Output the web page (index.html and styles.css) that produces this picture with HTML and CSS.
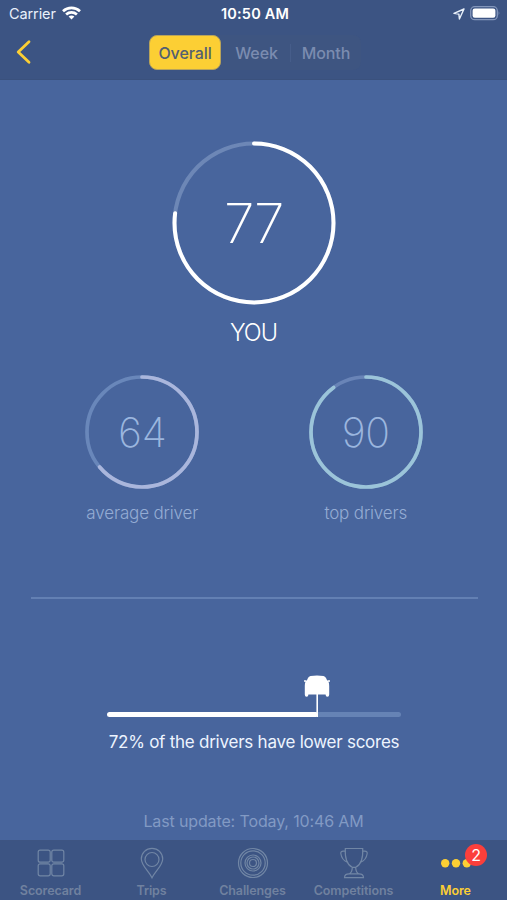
FILE: index.html
```html
<!DOCTYPE html>
<html lang="en">
<head>
<meta charset="utf-8">
<title>Scorecard</title>
<link rel="stylesheet" href="styles.css">
</head>
<body>
<div class="app">
  <header class="top">
    <div class="status">
      <div class="carrier"><span>Carrier</span>
        <svg width="19" height="14" viewBox="0 0 19 14" fill="none" stroke="#fff" stroke-width="2.700"><path d="M1 5.200C5.800.8 13.200.8 18 5.200"/><path d="M4.100 8.500c3.100-2.800 7.700-2.800 10.800 0"/><path d="M9.500 13.500 6.600 10.600c1.700-1.400 4.100-1.400 5.800 0z" fill="#fff" stroke="none"/></svg>
      </div>
      <time class="clock">10:50 AM</time>
      <div class="indicators">
        <svg width="12" height="12" viewBox="0 0 12 12" fill="none" stroke="#e8f0fa" stroke-width="1.400" stroke-linejoin="round"><path d="M11 1 1 5.400l4.900.7.5 4.900z"/></svg>
        <svg width="31" height="15" viewBox="0 0 31 15"><rect x=".7" y=".7" width="26.600" height="13" rx="4" fill="none" stroke="#8396bb" stroke-width="1.300"/><rect x="2.600" y="2.600" width="22.800" height="9.200" rx="2.200" fill="#fff"/><path d="M28.600 5q1.800 2.200 0 4.400z" fill="#8396bb"/></svg>
      </div>
    </div>
    <nav class="nav">
      <svg class="back" width="16" height="26" viewBox="0 0 16 26" fill="none" stroke="#fccf34" stroke-width="2.800" stroke-linecap="round" stroke-linejoin="round"><path d="M14 2.800 3.200 13 14 23.200"/></svg>
      <div class="tabs"><span class="tab active">Overall</span><span class="tab week">Week</span><span class="tab month">Month</span></div>
    </nav>
  </header>

  <main class="content">
    <section class="score you">
      <div class="ring">
        <svg width="164" height="164" viewBox="-82 -82 164 164" fill="none" stroke-width="4"><circle r="79.500" stroke="#6d87b6"/><circle r="79.500" stroke="#fff" stroke-linecap="round" pathLength="100" stroke-dasharray="77 100" transform="rotate(-90)"/></svg>
        <span class="value">77</span>
      </div>
      <span class="label">YOU</span>
    </section>
    <div class="pair">
      <section class="score average">
        <div class="ring">
          <svg width="116" height="116" viewBox="-58 -58 116 116" fill="none" stroke-width="3.700"><circle r="55" stroke="#6987ba"/><circle r="55" stroke="#aab6dc" stroke-linecap="round" pathLength="100" stroke-dasharray="64 100" transform="rotate(-90)"/></svg>
          <span class="value">64</span>
        </div>
        <span class="label">average driver</span>
      </section>
      <section class="score best">
        <div class="ring">
          <svg width="116" height="116" viewBox="-58 -58 116 116" fill="none" stroke-width="3.700"><circle r="55" stroke="#6984b7"/><circle r="55" stroke="#9bc4d9" stroke-linecap="round" pathLength="100" stroke-dasharray="90 100" transform="rotate(-90)"/></svg>
          <span class="value">90</span>
        </div>
        <span class="label">top drivers</span>
      </section>
    </div>
    <hr class="rule">
    <section class="rank">
      <svg class="gauge" width="294" height="44" viewBox="0 0 294 44">
        <path d="M211 39.500h80.500" stroke="#6683b5" stroke-width="5" stroke-linecap="round"/>
        <path d="M2.500 39.500H208.500" stroke="#fff" stroke-width="5" stroke-linecap="round"/>
        <path d="M210.200 18v24" stroke="#fff" stroke-width="1.600"/>
        <path d="M203.500 .9q6.500-1 13 0 1.700.4 2.500 2l1.300 2.900 .5-.6h2.200v1.600h-1.500q.7 1.400.7 4V19.500q0 2.200-1.800 2.200t-1.800-2.200H201.400q0 2.200-1.800 2.200t-1.800-2.200V10.800q0-2.600.7-4h-1.500V5.200h2.200l.5.600 1.300-2.900q.8-1.600 2.500-2z" fill="#fff"/>
      </svg>
      <p class="rank-text">72% of the drivers have lower scores</p>
    </section>
    <p class="updated">Last update: Today, 10:46 AM</p>
  </main>

  <footer class="tabbar">
    <div class="item"><svg width="34" height="34" viewBox="-17 -17 34 34"><rect x="-12.800" y="-12.800" width="12" height="12" rx="2"/><rect x=".8" y="-12.800" width="12" height="12" rx="2"/><rect x="-12.800" y=".8" width="12" height="12" rx="2"/><rect x=".8" y=".8" width="12" height="12" rx="2"/></svg><span>Scorecard</span></div>
    <div class="item"><svg width="34" height="34" viewBox="-17 -17 34 34"><path d="M0 14.800C-3 8.500-10.700 2.500-10.700-4a10.700 10.700 0 0 1 21.400 0C10.700 2.500 3 8.500 0 14.800z"/><circle cy="-3.500" r="7"/></svg><span>Trips</span></div>
    <div class="item"><svg width="34" height="34" viewBox="-17 -17 34 34"><circle r="14.500"/><circle r="12.200"/><circle r="8"/><circle r="6"/><circle r="3.500"/></svg><span>Challenges</span></div>
    <div class="item"><svg width="34" height="34" viewBox="-17 -17 34 34"><path d="M-8.700-14.500H8.700C9.200-5 6.500 2 1.700 4.300h-3.400C-6.500 2-9.200-5-8.700-14.500zM-8.500-11.800h-2q-3-.2-2.700 2.300C-12.500-5-10-2-6.700-.8M8.500-11.800h2q3-.2 2.700 2.300C12.500-5 10-2 6.700-.8M-1.700 4.300c0 4-.8 5.500-3.200 6.700M1.700 4.300c0 4 .8 5.500 3.200 6.700M-9.500 14.700c0-2.500 1.500-3.800 4.600-3.800H4.900c3.100 0 4.600 1.300 4.600 3.800z"/></svg><span>Competitions</span></div>
    <div class="item more"><svg width="34" height="34" viewBox="-17 -17 34 34"><circle cx="-10.800" cy=".3" r="4.200"/><circle cy=".3" r="4.200"/><circle cx="10.800" cy=".3" r="4.200"/></svg><span>More</span><b class="badge">2</b></div>
  </footer>
</div>
</body>
</html>
```
FILE: styles.css
```css
* { box-sizing: border-box; }
body { margin: 0; font-family: Inter, "Liberation Sans", sans-serif; color: #fff; background: #48659d; }
svg { display: block; }
p { margin: 0; }
.app { width: 507px; height: 900px; display: flex; flex-direction: column; overflow: hidden; background: #48659d; }
.top { height: 80px; flex: none; background: #3c5483; border-bottom: 1px solid #3a517d; }
.status { height: 27px; display: grid; grid-template-columns: 1fr auto 1fr; align-items: center; padding: 0 6px 0 9px; }
.carrier { display: flex; align-items: center; gap: 6px; font-size: 14.500px; color: #e9f0fb; letter-spacing: -.1px; }
.carrier svg { margin-top: -2px; }
.clock { font-size: 14.500px; font-weight: 600; letter-spacing: .2px; }
.indicators { display: flex; justify-content: flex-end; align-items: center; gap: 5px; }
.nav { height: 52px; display: flex; padding: 8px 0 0 15px; }
.back { margin-top: 4px; }
.tabs { display: flex; margin-left: 118px; height: 35px; background: #3e5581; border-radius: 8px; }
.tab { display: flex; align-items: center; justify-content: center; width: 70px; font-size: 16px; font-weight: 500; color: #7b8cb0; letter-spacing: -.1px; }
.active { width: 72px; color: #535f72; background: #fccf34; border: 1px solid #b8a35a; border-radius: 8px; }
.week { background: linear-gradient(#465d8a, #465d8a) right center / 1px 18px no-repeat; padding-left: 1px; }
.content { flex: 1; display: flex; flex-direction: column; align-items: center; padding-top: 61px; }
.score { display: flex; flex-direction: column; align-items: center; }
.ring { display: grid; place-items: center; }
.ring > * { grid-area: 1 / 1; }
.value { font-weight: 200; line-height: 1; }
.you { height: 233px; }
.you .value { font-size: 55px; letter-spacing: -1.500px; }
.you .label { margin-top: 13px; font-size: 23.500px; line-height: 30px; font-weight: 300; letter-spacing: -1px; }
.pair { width: 447px; height: 223px; display: grid; grid-template-columns: 1fr 1fr; position: relative; left: .5px; }
.pair .value { font-size: 41px; color: #9bb6df; letter-spacing: -.3px; }
.pair .label { margin-top: 11px; font-size: 17px; line-height: 24px; font-weight: 300; color: #94acd4; letter-spacing: -.15px; }
.rule { width: 447px; height: 2px; margin: 0 0 0 1px; border: 0; background: #6380b3; flex: none; }
.rank { display: flex; flex-direction: column; align-items: center; margin: 76px 0 0 1px; }
.rank-text { margin-top: 11px; font-size: 17px; line-height: 24px; color: #edf4ff; white-space: nowrap; letter-spacing: -.24px; }
.updated { margin-top: 55px; font-size: 16px; line-height: 24px; color: #829ac4; white-space: nowrap; letter-spacing: -.13px; }
.tabbar { height: 60px; flex: none; display: grid; grid-template-columns: repeat(5, 101px); justify-content: start; padding-top: 1px; background: #3c5483; border-top: 1px solid #3d5482; }
.item { position: relative; display: flex; flex-direction: column; align-items: center; padding-top: 4px; font-size: 12.500px; font-weight: 600; line-height: 18px; color: #70819f; letter-spacing: -.1px; }
.item svg { fill: none; stroke: #7186a5; stroke-width: 1.200; }
.item span { margin-top: 2px; white-space: nowrap; }
.more { color: #fccf34; left: 1px; }
.more svg { fill: #fccf34; stroke: none; }
.badge { position: absolute; left: 60px; top: 2px; width: 22px; height: 22px; border-radius: 50%; background: #fb3f3b; color: #fff; font-size: 16px; font-weight: 400; line-height: 22px; text-align: center; }
```
